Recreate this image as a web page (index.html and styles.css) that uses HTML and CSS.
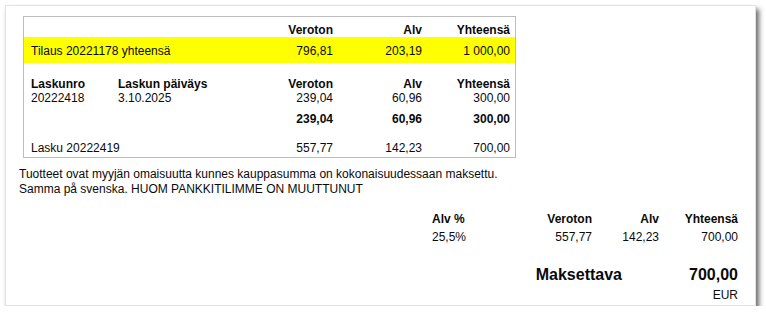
FILE: index.html
```html
<!DOCTYPE html>
<html lang="fi">
<head>
<meta charset="utf-8">
<title>Lasku</title>
<link rel="stylesheet" href="styles.css">
</head>
<body>
<div class="card">
  <div class="box">
    <div class="row head">
      <span class="c-wide"></span>
      <b class="num">Veroton</b>
      <b class="num">Alv</b>
      <b class="num">Yhteensä</b>
    </div>
    <div class="row order">
      <span class="c-wide">Tilaus 20221178 yhteensä</span>
      <span class="num">796,81</span>
      <span class="num">203,19</span>
      <span class="num">1 000,00</span>
    </div>
    <div class="row inv-head">
      <b>Laskunro</b>
      <b>Laskun päiväys</b>
      <b class="num">Veroton</b>
      <b class="num">Alv</b>
      <b class="num">Yhteensä</b>
    </div>
    <div class="row">
      <span>20222418</span>
      <span>3.10.2025</span>
      <span class="num">239,04</span>
      <span class="num">60,96</span>
      <span class="num">300,00</span>
    </div>
    <div class="row subtotal">
      <span class="c-wide"></span>
      <b class="num">239,04</b>
      <b class="num">60,96</b>
      <b class="num">300,00</b>
    </div>
    <div class="row invoice">
      <span class="c-wide">Lasku 20222419</span>
      <span class="num">557,77</span>
      <span class="num">142,23</span>
      <span class="num">700,00</span>
    </div>
  </div>

  <p class="notes">Tuotteet ovat myyjän omaisuutta kunnes kauppasumma on kokonaisuudessaan maksettu.<br>Samma på svenska. HUOM PANKKITILIMME ON MUUTTUNUT</p>

  <div class="summary">
    <b>Alv %</b>
    <b class="num">Veroton</b>
    <b class="num">Alv</b>
    <b class="num">Yhteensä</b>
    <span class="vals">25,5%</span>
    <span class="num vals">557,77</span>
    <span class="num vals">142,23</span>
    <span class="num vals">700,00</span>
  </div>

  <div class="pay">
    <b class="pay-label">Maksettava</b>
    <b class="pay-amount">700,00</b>
  </div>
  <div class="currency">EUR</div>
</div>
</body>
</html>
```

FILE: styles.css
```css
html, body {
  margin: 0;
  padding: 0;
  background: #ffffff;
}

body {
  font-family: "Liberation Sans", Arial, sans-serif;
  font-size: 12px;
  line-height: 14px;
  color: #0a0a0a;
}

.card {
  box-sizing: border-box;
  margin: 5px 0 0 5px;
  width: 751px;
  height: 301px;
  background: #fff;
  border: 1px solid #e2e2e2;
  box-shadow: 3px 4px 5px rgba(0, 0, 0, 0.6);
  padding: 10px 17px 0 13px;
  display: flex;
  flex-direction: column;
}

.box {
  margin-left: 4px;
  width: 493px;
  box-sizing: border-box;
  border: 1px solid #bdbdbd;
  padding-bottom: 2px;
}

.row {
  display: grid;
  grid-template-columns: 87px 125px 90px 89px 88px;
  padding: 0 5px 0 7px;
}

.c-wide {
  grid-column: span 2;
}

.num {
  text-align: right;
}

b {
  font-weight: bold;
}

.head {
  padding-top: 6px;
}

.order {
  background: #ffff00;
  padding-top: 7px;
  padding-bottom: 5px;
}

.inv-head {
  margin-top: 14px;
}

.subtotal {
  margin-top: 7px;
}

.invoice {
  margin-top: 15px;
}

.notes {
  margin: 9px 0 0 0;
  line-height: 15px;
}

.summary {
  align-self: flex-end;
  margin-top: 15px;
  display: grid;
  grid-template-columns: 80px 80px 67px 79px;
}

.vals {
  margin-top: 4px;
}

.pay {
  align-self: flex-end;
  display: flex;
  margin-top: 22px;
  font-size: 16px;
  line-height: 18px;
}

.pay-amount {
  width: 116px;
  text-align: right;
}

.currency {
  align-self: flex-end;
  margin-top: 4px;
}
```
